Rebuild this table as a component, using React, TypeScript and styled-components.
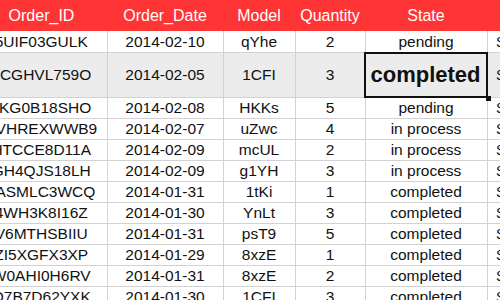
import styled, { createGlobalStyle } from 'styled-components';

const GlobalStyle = createGlobalStyle`
  html, body {
    margin: 0;
    padding: 0;
    background: #ffffff;
  }
  body {
    font-family: 'Liberation Sans', Arial, sans-serif;
  }
`;

type Order = {
  id: string;
  date: string;
  model: string;
  qty: number;
  state: string;
  price: string;
};

const orders: Order[] = [
  { id: '5UIF03GULK', date: '2014-02-10', model: 'qYhe', qty: 2, state: 'pending', price: '$395.20' },
  { id: '1CGHVL759O', date: '2014-02-05', model: '1CFI', qty: 3, state: 'completed', price: '$512.80' },
  { id: 'JKG0B18SHO', date: '2014-02-08', model: 'HKKs', qty: 5, state: 'pending', price: '$870.15' },
  { id: 'VVHREXWWB9', date: '2014-02-07', model: 'uZwc', qty: 4, state: 'in process', price: '$264.90' },
  { id: 'HTCCE8D11A', date: '2014-02-09', model: 'mcUL', qty: 2, state: 'in process', price: '$148.35' },
  { id: 'GH4QJS18LH', date: '2014-02-09', model: 'g1YH', qty: 3, state: 'in process', price: '$633.00' },
  { id: 'TASMLC3WCQ', date: '2014-01-31', model: '1tKi', qty: 1, state: 'completed', price: '$91.75' },
  { id: '4WH3K8I16Z', date: '2014-01-30', model: 'YnLt', qty: 3, state: 'completed', price: '$402.60' },
  { id: 'V6MTHSBIIU', date: '2014-01-31', model: 'psT9', qty: 5, state: 'completed', price: '$745.10' },
  { id: 'ZI5XGFX3XP', date: '2014-01-29', model: '8xzE', qty: 1, state: 'completed', price: '$129.99' },
  { id: 'W0AHI0H6RV', date: '2014-01-31', model: '8xzE', qty: 2, state: 'completed', price: '$259.98' },
  { id: 'O7B7D62YXK', date: '2014-01-30', model: '1CFI', qty: 3, state: 'completed', price: '$384.45' },
];

const EDIT_ROW = 1;

const Viewport = styled.div`
  width: 500px;
  height: 300px;
  overflow: hidden;
`;

const Sheet = styled.table`
  margin-left: -24px;
  border-collapse: collapse;
  table-layout: fixed;
  width: 700px;
  font-size: 15.5px;
  color: #111111;
`;

const HeadCell = styled.th`
  height: 31px;
  padding: 0;
  background: #ff3434;
  color: #ffffff;
  font-weight: 400;
  font-size: 16px;
  text-align: center;
  white-space: nowrap;
  overflow: hidden;
`;

const Row = styled.tr<{ $active?: boolean }>`
  background: ${({ $active }) => ($active ? '#ececec' : '#ffffff')};
`;

const Cell = styled.td<{ $tall?: boolean; $left?: boolean }>`
  height: ${({ $tall }) => ($tall ? '44px' : '20px')};
  padding: ${({ $left }) => ($left ? '0 0 0 9px' : '0')};
  border-bottom: 1px solid #d2d2d2;
  border-right: 1px solid #d2d2d2;
  text-align: ${({ $left }) => ($left ? 'left' : 'center')};
  white-space: nowrap;
  overflow: hidden;
  line-height: 20px;
`;

const FirstRowCell = styled(Cell)`
  height: 21px;
`;

const EditCell = styled.td`
  position: relative;
  padding: 0;
  border-bottom: 1px solid #d2d2d2;
  border-right: 1px solid #d2d2d2;
`;

const Editor = styled.div`
  box-sizing: border-box;
  height: 46px;
  margin: -1px -1px -1px -2px;
  border: 2px solid #111111;
  display: flex;
  align-items: center;
  justify-content: center;
  font-size: 22px;
  font-weight: 700;
  color: #111111;
`;

const FillHandle = styled.span`
  position: absolute;
  right: -4px;
  bottom: -4px;
  width: 5px;
  height: 5px;
  background: #111111;
`;

const columns = [
  { key: 'id', label: 'Order_ID', width: 131 },
  { key: 'date', label: 'Order_Date', width: 116 },
  { key: 'model', label: 'Model', width: 72 },
  { key: 'qty', label: 'Quantity', width: 70 },
  { key: 'state', label: 'State', width: 122 },
  { key: 'price', label: 'Total_Price', width: 189 },
];

export default function App() {
  return (
    <>
      <GlobalStyle />
      <Viewport>
        <Sheet>
          <colgroup>
            {columns.map((c) => (
              <col key={c.key} style={{ width: c.width }} />
            ))}
          </colgroup>
          <thead>
            <tr>
              {columns.map((c) => (
                <HeadCell key={c.key}>{c.label}</HeadCell>
              ))}
            </tr>
          </thead>
          <tbody>
            {orders.map((o, i) => {
              const active = i === EDIT_ROW;
              const C = i === 0 ? FirstRowCell : Cell;
              return (
                <Row key={o.id} $active={active}>
                  <C $tall={active}>{o.id}</C>
                  <C $tall={active}>{o.date}</C>
                  <C $tall={active}>{o.model}</C>
                  <C $tall={active}>{o.qty}</C>
                  {active ? (
                    <EditCell>
                      <Editor>{o.state}</Editor>
                      <FillHandle />
                    </EditCell>
                  ) : (
                    <C>{o.state}</C>
                  )}
                  <C $tall={active} $left>
                    {o.price}
                  </C>
                </Row>
              );
            })}
          </tbody>
        </Sheet>
      </Viewport>
    </>
  );
}
